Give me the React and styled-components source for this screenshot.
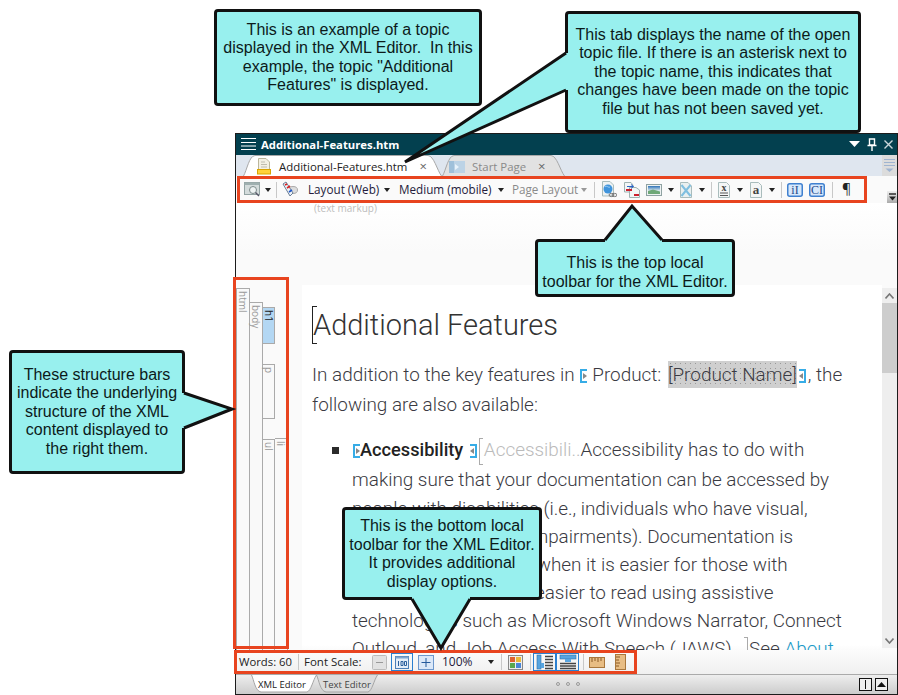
import React from "react";
import styled, { createGlobalStyle } from "styled-components";

const GlobalStyle = createGlobalStyle`
  html, body { margin: 0; padding: 0; background: #fff; }
  * { box-sizing: border-box; }
`;

const UI_FONT = `"Open Sans", "Noto Sans", sans-serif`;

const Page = styled.div`
  position: relative;
  width: 898px;
  height: 695px;
  padding: 133px 0 0 235px;
  overflow: hidden;
`;

const Window = styled.div`
  width: 663px;
  height: 562px;
  border: 1px solid #1c1c1c;
  display: flex;
  flex-direction: column;
  font-family: ${UI_FONT};
`;

const TitleBar = styled.div`
  height: 21px;
  background: #03404f;
  color: #fff;
  display: flex;
  align-items: center;
  padding: 0 4px 1px 5px;
  font-size: 11.3px;
  font-weight: 700;
`;

const Title = styled.span`
  margin-left: 5px;
  flex: 1;
`;

const TitleIcons = styled.div`
  display: flex;
  align-items: center;
  gap: 7px;
`;

const TabStrip = styled.div`
  height: 21px;
  background: #dfe6ef;
  display: flex;
  padding-left: 7px;
  align-items: flex-end;
`;

const Tab = styled.div`
  position: relative;
  width: ${(p) => p.$w}px;
  height: ${(p) => p.$h}px;
  margin-left: ${(p) => p.$ml || 0}px;
  padding-top: ${(p) => p.$pt || 0}px;
  display: flex;
  align-items: center;
  flex: none;
`;

const TabShape = styled.svg`
  position: absolute;
  left: 0;
  top: 0;
`;

const TabLabel = styled.span`
  position: relative;
  font-size: ${(p) => p.$size || 11.4}px;
  color: ${(p) => p.$color || "#222"};
  margin-left: ${(p) => p.$ml || 0}px;
  white-space: nowrap;
`;

const TabIconSlot = styled.span`
  position: relative;
  display: flex;
  margin-left: ${(p) => p.$ml || 0}px;
`;

const TabClose = styled.span`
  position: relative;
  margin-left: ${(p) => p.$ml}px;
  font-size: 13px;
  color: #666;
  line-height: 1;
`;

const StripScroller = styled.div`
  margin-left: auto;
  width: 15px;
  height: 21px;
  background: #dcdcdc;
  display: flex;
  align-items: center;
  justify-content: center;
`;

const ToolRow = styled.div`
  height: 27px;
  background: #fafafa;
  display: flex;
  align-items: stretch;
  justify-content: space-between;
`;

const ToolFrame = styled.div`
  margin-left: ${(p) => p.$ml || 0}px;
  width: ${(p) => p.$w}px;
  height: ${(p) => p.$h}px;
  border: 3px solid #e8441f;
  display: flex;
  align-items: center;
  flex: none;
  position: relative;
`;

const Item = styled.span`
  display: flex;
  align-items: center;
  flex: none;
  margin-left: ${(p) => p.$ml || 0}px;
  width: ${(p) => (p.$w ? `${p.$w}px` : "auto")};
`;

const ToolText = styled(Item)`
  font-size: ${(p) => p.$size || 11.7}px;
  color: ${(p) => p.$color || "#241a3a"};
  white-space: nowrap;
  padding-bottom: 2px;
`;

const Arrow = styled.span`
  flex: none;
  margin-left: ${(p) => p.$ml || 0}px;
  width: 0;
  height: 0;
  border-left: 3.5px solid transparent;
  border-right: 3.5px solid transparent;
  border-top: 4px solid ${(p) => p.$color || "#222"};
`;

const Sep = styled.span`
  flex: none;
  margin-left: ${(p) => p.$ml || 0}px;
  width: 1px;
  height: 16px;
  background: #c8c8c8;
`;

const BlueBox = styled.span`
  flex: none;
  display: flex;
  align-items: center;
  justify-content: center;
  margin-left: ${(p) => p.$ml || 0}px;
  width: ${(p) => p.$w}px;
  height: 18px;
  border: 1px solid #2a7fd0;
`;

const OverflowButton = styled.div`
  margin: 15px 0 0 0;
  width: 10px;
  height: 12px;
  background: linear-gradient(#eee, #aaa);
  display: flex;
  align-items: center;
  justify-content: center;
`;

const Editor = styled.div`
  height: 447px;
  display: flex;
  flex-direction: column;
  background: #fafafa;
`;

const TopBand = styled.div`
  height: 82px;
  padding: 0 0 0 78px;
  font-size: 10px;
  color: #bdbdbd;
  background: linear-gradient(#fff, #fafafa 60%);
  line-height: 10px;
`;

const MainRow = styled.div`
  height: 365px;
  display: flex;
`;

const Gutter = styled.div`
  width: 66px;
  flex: none;
  display: flex;
  padding-top: 3px;
`;

const BarColumn = styled.div`
  width: ${(p) => p.$w}px;
  margin-top: ${(p) => p.$top || 0}px;
  display: flex;
  flex-direction: column;
  flex: none;
`;

const StructBar = styled.div`
  width: ${(p) => p.$w || 13}px;
  height: ${(p) => (p.$h ? `${p.$h}px` : "auto")};
  flex: ${(p) => (p.$h ? "none" : "1")};
  margin-top: ${(p) => p.$top || 0}px;
  background: ${(p) => (p.$on ? "#b3d7f3" : "#f9f9f9")};
  border: 1px solid #aaa;
  border-left: ${(p) => (p.$first ? "1px solid #aaa" : "none")};
  border-bottom: ${(p) => (p.$h ? "1px solid #aaa" : "none")};
  color: ${(p) => (p.$on ? "#222" : "#999")};
  font-size: 10px;
  line-height: 11px;
  position: relative;
`;

const BarLabel = styled.span`
  position: absolute;
  left: 0;
  top: 2px;
  writing-mode: vertical-rl;
`;

const Doc = styled.div`
  flex: 1;
  height: 365px;
  background: linear-gradient(#fff 360px, #fbfbfb);
  padding: 21px 0 0 10px;
  overflow: hidden;
  font-family: Roboto, sans-serif;
  font-weight: 300;
  font-size: 18.9px;
  color: #3a3a42;
`;

const Heading = styled.h1`
  position: relative;
  margin: 0;
  height: 36px;
  padding-left: 1px;
  font-size: 29px;
  font-weight: 300;
  line-height: 38px;
  color: #333;
  &::before {
    content: "";
    position: absolute;
    left: 0;
    top: 0;
    width: 4px;
    height: 36px;
    border: 1px solid #222;
    border-right: none;
  }
`;

const Para = styled.div`
  margin-top: 18px;
`;

const Bullets = styled.ul`
  margin: 15px 0 0 0;
  padding: 0 0 0 40px;
  list-style: none;
`;

const Bullet = styled.li`
  position: relative;
  &::before {
    content: "";
    position: absolute;
    left: -20px;
    top: 12px;
    width: 7px;
    height: 7px;
    background: #2b2b2b;
  }
`;

const Line = styled.div`
  line-height: ${(p) => p.$h || 28}px;
  height: ${(p) => p.$h || 28}px;
  white-space: nowrap;
`;

const Mark = styled.span`
  display: inline-block;
  position: relative;
  width: 7px;
  height: 14px;
  vertical-align: -2px;
  margin: 0 ${(p) => (p.$close ? 2 : p.$mr || 0)}px 0 ${(p) => (p.$close ? 2 : 1)}px;
  border: 2px solid #37ace6;
  border-${(p) => (p.$close ? "left" : "right")}: none;
  &::after {
    content: "";
    position: absolute;
    top: 2px;
    ${(p) => (p.$close ? "right: 1px;" : "left: 1px;")}
    border-top: 3.5px solid transparent;
    border-bottom: 3.5px solid transparent;
    border-${(p) => (p.$close ? "right" : "left")}: 4px solid #888;
  }
`;

const Strong = styled.span`
  font-size: 18.2px;
  font-weight: 500;
  color: #222;
`;

const Label = styled.span`
  margin-right: 2px;
`;

const Shaded = styled.span`
  background-color: #cfcfcf;
  background-image: radial-gradient(#999 0.5px, transparent 0.7px);
  background-size: 5px 5px;
  padding: 2px 0;
`;

const IndexBracket = styled.span`
  display: inline-block;
  width: 4px;
  height: 27px;
  margin: 0 1px 0 0;
  vertical-align: -9px;
  border: 1px solid #aaa;
  border-right: none;
`;

const CloseBracket = styled(IndexBracket)`
  border-left: none;
  border-right: 1px solid #aaa;
  margin: 0 1px 0 8px;
`;

const Ghost = styled.span`
  color: #bbb;
`;

const Link = styled.span`
  color: #1b9ac8;
`;

const Scrollbar = styled.div`
  width: 15px;
  flex: none;
  margin-top: 3px;
  height: 360px;
  background: #eee;
  display: flex;
  flex-direction: column;
`;

const ScrollArrow = styled.div`
  height: 15px;
  display: flex;
  align-items: center;
  justify-content: center;
  flex: none;
`;

const ScrollThumb = styled.div`
  height: 70px;
  background: #cdcdcd;
  margin-bottom: auto;
`;

const BottomBar = styled.div`
  height: 24px;
  background: linear-gradient(#fcfcfc, #f0f0f0);
  display: flex;
`;

const BottomTabs = styled.div`
  height: 20px;
  border-top: 1px solid #aaa;
  background: linear-gradient(#eee, #ccc);
  display: flex;
  align-items: flex-start;
  padding: 0 9px 0 15px;
`;

const Dots = styled.div`
  margin-left: 178px;
  margin-top: 7px;
  display: flex;
  gap: 6px;
`;

const Dot = styled.span`
  width: 4px;
  height: 4px;
  border: 1px solid #999;
  border-radius: 50%;
`;

const MiniButtons = styled.div`
  margin-left: auto;
  margin-top: 3px;
  display: flex;
  gap: 3px;
`;

const MiniButton = styled.span`
  width: 13px;
  height: 13px;
  border: 1px solid #111;
  background: #eee;
  display: flex;
  align-items: center;
  justify-content: center;
`;

const CalloutBox = styled.div`
  position: absolute;
  left: ${(p) => p.$x}px;
  top: ${(p) => p.$y}px;
  width: ${(p) => p.$w}px;
  height: ${(p) => p.$h}px;
  background: #98f0ee;
  border: 3px solid #111;
  border-radius: 4px;
  display: flex;
  flex-direction: column;
  align-items: center;
  justify-content: ${(p) => p.$justify || "center"};
  padding-top: ${(p) => p.$pad || 0}px;
  font-family: "Liberation Sans", Arial, sans-serif;
  font-size: 16px;
  line-height: 18.5px;
  color: #0c1a1a;
  text-align: center;
  white-space: pre;
`;

const CalloutTail = styled.svg`
  position: absolute;
  left: ${(p) => -p.$x - 3}px;
  top: ${(p) => -p.$y - 3}px;
  width: 898px;
  height: 695px;
  pointer-events: none;
  overflow: visible;
`;

const CalloutText = styled.div`
  position: relative;
`;

const RedBox = styled.div`
  position: absolute;
  left: 233px;
  top: 277px;
  width: 56px;
  height: 372px;
  border: 3px solid #e8441f;
`;

const Callout = ({ x, y, w, h, tail, shift, pad, justify, children }) => {
  const edge = tail && tail.map((p) => p.join(",")).join(" ");
  const inner = (p) => `${p[0] + shift[0]},${p[1] + shift[1]}`;
  return (
    <CalloutBox $x={x} $y={y} $w={w} $h={h} $pad={pad} $justify={justify}>
      {tail && (
        <CalloutTail $x={x} $y={y}>
          <polygon points={`${edge} ${inner(tail[2])} ${inner(tail[0])}`} fill="#98f0ee" />
          <polyline points={edge} fill="none" stroke="#111" strokeWidth="3" />
        </CalloutTail>
      )}
      <CalloutText>{children}</CalloutText>
    </CalloutBox>
  );
};

const TopTabPath = ({ w, h, fill, stroke }) => (
  <TabShape width={w} height={h}>
    <path
      d={`M0.5 ${h} C4 ${h - 6} 6 1 12 0.5 L${w - 14} 0.5 C${w - 8} 1 ${w - 5} ${h - 6} ${w - 0.5} ${h}`}
      fill={fill}
      stroke={stroke}
    />
  </TabShape>
);

const BottomTabPath = ({ w, h, fill }) => (
  <TabShape width={w} height={h}>
    <path
      d={`M0.5 0 C3 5 4 ${h - 2} 10 ${h - 1} L${w - 10} ${h - 1} C${w - 6} ${h - 2} ${w - 4} 5 ${w - 0.5} 0`}
      fill={fill}
      stroke="#a5a5a5"
    />
  </TabShape>
);

const MenuIcon = () => (
  <svg width="15" height="14">
    <path d="M0 1.5H15M0 5.5H15M0 9H15M0 12.5H15" stroke="#fff" strokeWidth="1" />
  </svg>
);

const PinIcon = () => (
  <svg width="10" height="13">
    <path d="M2.5 1H7.5V7H2.5ZM0.5 7.5H9.5M5 7.5V13" stroke="#fff" fill="none" strokeWidth="1.4" />
  </svg>
);

const CloseIcon = ({ color = "#c9d6da", size = 9 }) => (
  <svg width={size} height={size}>
    <path d={`M0.5 0.5L${size - 0.5} ${size - 0.5}M${size - 0.5} 0.5L0.5 ${size - 0.5}`} stroke={color} strokeWidth="1.4" />
  </svg>
);

const DownIcon = () => (
  <svg width="11" height="7">
    <path d="M0 0H11L5.5 6Z" fill="#fff" />
  </svg>
);

const TopicIcon = () => (
  <svg width="14" height="17">
    <path d="M1.5 0.5H9L12.5 4V12H1.5Z" fill="#f3f0e4" stroke="#bbb69c" />
    <path d="M4 4H8M4 6.5H10M4 9H10" stroke="#bfbcae" />
    <rect x="0.5" y="11.5" width="13" height="4.5" fill="#ffd23a" stroke="#d9a400" />
  </svg>
);

const StartIcon = () => (
  <svg width="16" height="12">
    <rect width="16" height="12" fill="#bcd3e6" />
    <rect x="0" y="0" width="5" height="12" fill="#9fc0da" />
    <path d="M6 3L10 6L6 9Z" fill="#e8f2fa" />
  </svg>
);

const PreviewIcon = () => (
  <svg width="16" height="15">
    <rect x="0.5" y="0.5" width="15" height="12" fill="#d4dcdc" stroke="#93a3a3" />
    <rect x="0.5" y="0.5" width="15" height="2.5" fill="#9fb0b0" />
    <circle cx="9" cy="8" r="3.5" fill="#eef3f3" stroke="#7d8c8c" />
    <path d="M11.5 10.5L15 14" stroke="#556" strokeWidth="1.4" />
  </svg>
);

const MarkerIcon = () => (
  <svg width="16" height="18">
    <ellipse cx="11" cy="9" rx="4.5" ry="3.5" fill="#dcdcdc" stroke="#aaa" />
    <path d="M1 3L4 1L11 12L8 15Z" fill="#eef2f6" stroke="#6a7f96" />
    <path d="M3 4L5 3M5 7L8 5" stroke="#d22" strokeWidth="1.6" />
    <path d="M7 11L10 9" stroke="#1e56c8" strokeWidth="1.6" />
  </svg>
);

const GlobeIcon = () => (
  <svg width="15" height="17">
    <path d="M0.5 0.5H8L11.5 4V15H0.5Z" fill="#eef2f2" stroke="#a9bcbc" />
    <circle cx="6" cy="8" r="4.5" fill="#3f94dc" />
    <path d="M3 6C5 4 6 7 8 6" stroke="#a7d4f5" fill="none" />
    <ellipse cx="9.5" cy="14" rx="2.5" ry="1.6" fill="none" stroke="#777" />
    <ellipse cx="12.5" cy="14" rx="2.5" ry="1.6" fill="none" stroke="#777" />
  </svg>
);

const PageRefIcon = () => (
  <svg width="16" height="16">
    <path d="M0.5 0.5H7L9 3V10H0.5Z" fill="#f3f6f6" stroke="#9fb2b2" />
    <path d="M5.5 5.5H12L15.5 8V15.5H5.5Z" fill="#f3f6f6" stroke="#9fb2b2" />
    <rect x="2" y="7" width="6" height="2" fill="#cc1f2e" />
    <rect x="10" y="12" width="5" height="2" fill="#cc1f2e" />
    <path d="M3 4.5H9M7 2.5L9.5 4.5L7 6.5" stroke="#2b62c4" fill="none" />
  </svg>
);

const PictureIcon = () => (
  <svg width="16" height="12">
    <defs>
      <linearGradient id="pictureSky" x1="0" y1="0" x2="0" y2="1">
        <stop offset="0" stopColor="#2f73b8" />
        <stop offset="1" stopColor="#e6f0f0" />
      </linearGradient>
    </defs>
    <rect x="0.5" y="0.5" width="15" height="11" fill="#eef2f2" stroke="#8fa2a2" />
    <rect x="2" y="2" width="12" height="5" fill="url(#pictureSky)" />
    <path d="M2 7L7 5.5L14 7.5V10H2Z" fill="#6fa878" />
  </svg>
);

const BrokenIcon = () => (
  <svg width="12" height="16">
    <path d="M0.5 0.5H8L11.5 4V15.5H0.5Z" fill="#eaf0f0" stroke="#a9bcbc" />
    <path d="M1.5 3L10.5 14M10.5 3L1.5 14" stroke="#7fbfe0" strokeWidth="2" />
  </svg>
);

const LetterDocIcon = ({ letter, lines }) => (
  <svg width="12" height="16">
    <path d="M0.5 0.5H8.5L11.5 3.5V15.5H0.5Z" fill="#f4f6f6" stroke="#a9bcbc" />
    <text x="6" y={lines ? 9 : 12} fontFamily="Liberation Serif" fontWeight="700" fontSize={lines ? 10 : 13} textAnchor="middle" fill="#444">
      {letter}
    </text>
    {lines && <path d="M2 11H10M2 13.5H10" stroke="#555" />}
  </svg>
);

const TagIcon = ({ text }) => (
  <svg width="16" height="14">
    <rect x="0.75" y="0.75" width="14.5" height="12.5" rx="2" fill="#d7e8fb" stroke="#3f80d0" strokeWidth="1.5" />
    <text x="8" y="11" fontFamily="Liberation Serif" fontSize="12" textAnchor="middle" fill="#234a8c">
      {text}
    </text>
  </svg>
);

const MinusIcon = () => (
  <svg width="15" height="15">
    <rect x="0.5" y="0.5" width="14" height="14" rx="1" fill="#e2e2e2" stroke="#bbb" />
    <path d="M4 7.5H11" stroke="#999" />
  </svg>
);

const HundredIcon = () => (
  <svg width="14" height="13">
    <rect x="0.5" y="0.5" width="13" height="12" fill="#e4edf8" stroke="#4c7fb8" />
    <rect x="0.5" y="0.5" width="13" height="2" fill="#7fa5d0" />
    <path d="M3.5 5V10M6 5.5H8V9.5H6ZM9.5 5.5H11.5V9.5H9.5Z" stroke="#2b5f9c" fill="none" />
  </svg>
);

const PlusIcon = () => (
  <svg width="16" height="15">
    <rect x="0.5" y="0.5" width="15" height="14" fill="#dbe8f8" stroke="#6d97cc" />
    <path d="M3.5 7.5H12.5M8 3V12" stroke="#245a9c" />
  </svg>
);

const GridIcon = () => (
  <svg width="15" height="15">
    <rect x="0.5" y="0.5" width="14" height="14" fill="#eee" stroke="#888" />
    <rect x="2" y="2" width="5" height="5" fill="#e0622e" />
    <rect x="8" y="2" width="5" height="5" fill="#e9b93a" />
    <rect x="2" y="8" width="5" height="5" fill="#5aa84e" />
    <rect x="8" y="8" width="5" height="5" fill="#4a86d8" />
  </svg>
);

const SideBarsIcon = () => (
  <svg width="18" height="16">
    <rect x="1" y="1" width="4" height="14" fill="#58a5e0" stroke="#2f6fa8" strokeWidth="0.6" />
    <rect x="5" y="9" width="3" height="5" fill="#58a5e0" />
    <path d="M9 2.5H17M9 5.5H17M9 8.5H17M9 11.5H17M9 14.5H17" stroke="#444" strokeWidth="1.4" />
  </svg>
);

const TopBarsIcon = () => (
  <svg width="18" height="16">
    <rect x="1" y="1" width="16" height="4" fill="#58a5e0" stroke="#2f6fa8" strokeWidth="0.6" />
    <rect x="6" y="5" width="6" height="3" fill="#58a5e0" />
    <path d="M1 9.5H17M1 12H17M1 14.5H17" stroke="#444" strokeWidth="1.4" />
  </svg>
);

const RulerIcon = () => (
  <svg width="16" height="11">
    <rect x="0.5" y="0.5" width="15" height="10" fill="#e8bd84" stroke="#a9773d" />
    <path d="M3 1V5M6 1V4M9 1V5M12 1V4" stroke="#8a5a26" />
  </svg>
);

const VRulerIcon = () => (
  <svg width="11" height="16">
    <rect x="0.5" y="0.5" width="10" height="15" fill="#e8bd84" stroke="#a9773d" />
    <path d="M1 3H5M1 6H4M1 9H5M1 12H4" stroke="#8a5a26" />
  </svg>
);

const Chevron = ({ up }) => (
  <svg width="9" height="6">
    <path d={up ? "M0.5 5.5L4.5 1L8.5 5.5" : "M0.5 0.5L4.5 5L8.5 0.5"} fill="none" stroke="#777" strokeWidth="1.6" />
  </svg>
);

const StripLines = () => (
  <svg width="11" height="15">
    <path d="M0 1.5H11M0 4.5H11M0 7.5H11" stroke="#9fb4d0" />
    <path d="M1.5 10.5H9.5L5.5 14Z" fill="#9fb4d0" />
  </svg>
);

const OverflowIcon = () => (
  <svg width="7" height="8">
    <path d="M0 1H7" stroke="#222" strokeWidth="1.4" />
    <path d="M0 3.5H7L3.5 7.5Z" fill="#222" />
  </svg>
);

const App = () => {
  return (
    <Page>
      <GlobalStyle />
      <Window>
        <TitleBar>
          <MenuIcon />
          <Title>Additional-Features.htm</Title>
          <TitleIcons>
            <DownIcon />
            <PinIcon />
            <CloseIcon />
          </TitleIcons>
        </TitleBar>

        <TabStrip>
          <Tab $w={199} $h={21} $pt={2}>
            <TopTabPath w={199} h={21} fill="#fff" stroke="#a8a8a8" />
            <TabIconSlot $ml={14}><TopicIcon /></TabIconSlot>
            <TabLabel $ml={8}>Additional-Features.htm</TabLabel>
            <TabClose $ml={12}>×</TabClose>
          </Tab>
          <Tab $w={123} $h={21} $pt={2}>
            <TopTabPath w={123} h={21} fill="#e2e2e2" stroke="#a8a8a8" />
            <TabIconSlot $ml={7}><StartIcon /></TabIconSlot>
            <TabLabel $ml={7} $color="#8a8a8a">Start Page</TabLabel>
            <TabClose $ml={12}>×</TabClose>
          </Tab>
          <StripScroller><StripLines /></StripScroller>
        </TabStrip>

        <ToolRow>
          <ToolFrame $ml={1} $w={630} $h={27}>
            <Item $ml={4}><PreviewIcon /></Item>
            <Arrow $ml={5} />
            <Sep $ml={5} />
            <Item $ml={5}><MarkerIcon /></Item>
            <ToolText $ml={10} $w={71}>Layout (Web)</ToolText>
            <Arrow $ml={5} />
            <ToolText $ml={9} $w={93}>Medium (mobile)</ToolText>
            <Arrow $ml={6} />
            <ToolText $ml={8} $w={66} $color="#8a8a8a">Page Layout</ToolText>
            <Arrow $ml={3} $color="#999" />
            <Sep $ml={7} />
            <Item $ml={7}><GlobeIcon /></Item>
            <Item $ml={7}><PageRefIcon /></Item>
            <Item $ml={6}><PictureIcon /></Item>
            <Arrow $ml={6} />
            <Item $ml={6}><BrokenIcon /></Item>
            <Arrow $ml={7} />
            <Sep $ml={6} />
            <Item $ml={6}><LetterDocIcon letter="x" lines /></Item>
            <Arrow $ml={7} />
            <Item $ml={7}><LetterDocIcon letter="a" /></Item>
            <Arrow $ml={7} />
            <Sep $ml={6} />
            <Item $ml={5}><TagIcon text="iI" /></Item>
            <Item $ml={6}><TagIcon text="CI" /></Item>
            <Sep $ml={7} />
            <ToolText $ml={9} $size={14} $color="#222">¶</ToolText>
          </ToolFrame>
          <OverflowButton><OverflowIcon /></OverflowButton>
        </ToolRow>

        <Editor>
          <TopBand>(text markup)</TopBand>
          <MainRow>
            <Gutter>
              <BarColumn $w={14}>
                <StructBar $w={14} $first><BarLabel>html</BarLabel></StructBar>
              </BarColumn>
              <BarColumn $w={13} $top={14}>
                <StructBar><BarLabel>body</BarLabel></StructBar>
              </BarColumn>
              <BarColumn $w={12} $top={19}>
                <StructBar $w={12} $h={37} $on><BarLabel>h1</BarLabel></StructBar>
                <StructBar $w={12} $h={55} $top={20}><BarLabel>p</BarLabel></StructBar>
                <StructBar $w={12} $top={20}><BarLabel>ul</BarLabel></StructBar>
              </BarColumn>
              <BarColumn $w={13} $top={150}>
                <StructBar><BarLabel>li</BarLabel></StructBar>
              </BarColumn>
            </Gutter>
            <Doc>
              <Heading>Additional Features</Heading>
              <Para>
                <Line $h={30}>
                  In addition to the key features in <Mark $mr={5} /><Label>Product:</Label> <Shaded>[Product Name]</Shaded><Mark $close />, the
                </Line>
                <Line $h={30}>following are also available:</Line>
              </Para>
              <Bullets>
                <Bullet>
                  <Line $h={30}>
                    <Mark /><Strong>Accessibility</Strong> <Mark $close /><IndexBracket /><Ghost>Accessibili..</Ghost>Accessibility has to do with
                  </Line>
                  <Line $h={30}>making sure that your documentation can be accessed by</Line>
                  <Line>people with disabilities (i.e., individuals who have visual,</Line>
                  <Line>auditory, or cognitive impairments). Documentation is</Line>
                  <Line>also more meaningful when it is easier for those with</Line>
                  <Line>disabilities to use and easier to read using assistive</Line>
                  <Line>technologies such as Microsoft Windows Narrator, Connect</Line>
                  <Line>
                    Outloud, and Job Access With Speech (JAWS).<CloseBracket />See <Link>About</Link>
                  </Line>
                </Bullet>
              </Bullets>
            </Doc>
            <Scrollbar>
              <ScrollArrow><Chevron up /></ScrollArrow>
              <ScrollThumb />
              <ScrollArrow><Chevron /></ScrollArrow>
            </Scrollbar>
          </MainRow>
        </Editor>

        <BottomBar>
          <ToolFrame $ml={-2} $w={403} $h={24}>
            <ToolText $ml={2} $size={11.3} $color="#222" $w={52}>Words: 60</ToolText>
            <Sep $ml={7} />
            <ToolText $ml={5} $size={11.5} $color="#222" $w={57}>Font Scale:</ToolText>
            <Item $ml={11}><MinusIcon /></Item>
            <BlueBox $ml={4} $w={22}><HundredIcon /></BlueBox>
            <Item $ml={5}><PlusIcon /></Item>
            <ToolText $ml={8} $size={12} $w={46}>100%</ToolText>
            <Arrow $ml={0} />
            <Sep $ml={7} />
            <Item $ml={6}><GridIcon /></Item>
            <Sep $ml={7} />
            <BlueBox $ml={2} $w={23}><SideBarsIcon /></BlueBox>
            <BlueBox $w={23}><TopBarsIcon /></BlueBox>
            <Sep $ml={4} />
            <Item $ml={5}><RulerIcon /></Item>
            <Item $ml={10}><VRulerIcon /></Item>
          </ToolFrame>
        </BottomBar>

        <BottomTabs>
          <Tab $w={66} $h={18}>
            <BottomTabPath w={66} h={18} fill="#fff" />
            <TabLabel $ml={7} $size={9.5}>XML Editor</TabLabel>
          </Tab>
          <Tab $w={62} $h={18} $ml={-1}>
            <BottomTabPath w={62} h={18} fill="#dcdcdc" />
            <TabLabel $ml={7} $size={9.5} $color="#444">Text Editor</TabLabel>
          </Tab>
          <Dots><Dot /><Dot /><Dot /></Dots>
          <MiniButtons>
            <MiniButton>
              <svg width="3" height="9"><path d="M1.5 0V9" stroke="#111" /></svg>
            </MiniButton>
            <MiniButton>
              <svg width="9" height="5"><path d="M0 5H9L4.5 0Z" fill="#111" /></svg>
            </MiniButton>
          </MiniButtons>
        </BottomTabs>
      </Window>

      <RedBox />

      <Callout x={214} y={9} w={268} h={97}>
        {`This is an example of a topic
displayed in the XML Editor.  In this
example, the topic "Additional
Features" is displayed.`}
      </Callout>
      <Callout x={565} y={11} w={296} h={122} tail={[[566, 53], [405, 162], [566, 90]]} shift={[5, 0]}>
        {`This tab displays the name of the open
topic file. If there is an asterisk next to
the topic name, this indicates that
changes have been made on the topic
file but has not been saved yet.`}
      </Callout>
      <Callout x={9} y={350} w={176} h={124} tail={[[184, 393], [232, 409], [184, 428]]} shift={[-5, 0]}>
        {`These structure bars
indicate the underlying
structure of the XML
content displayed to
the right them.`}
      </Callout>
      <Callout x={342} y={507} w={200} h={93} tail={[[412, 599], [441, 648], [470, 599]]} shift={[0, -5]} justify="flex-start" pad={7}>
        {`This is the bottom local
toolbar for the XML Editor.
It provides additional
display options.`}
      </Callout>
      <Callout x={535} y={239} w={200} h={58} tail={[[605, 240], [632, 206], [662, 240]]} shift={[0, 5]} pad={9}>
        {`This is the top local
toolbar for the XML Editor.`}
      </Callout>
    </Page>
  );
};

export default App;
